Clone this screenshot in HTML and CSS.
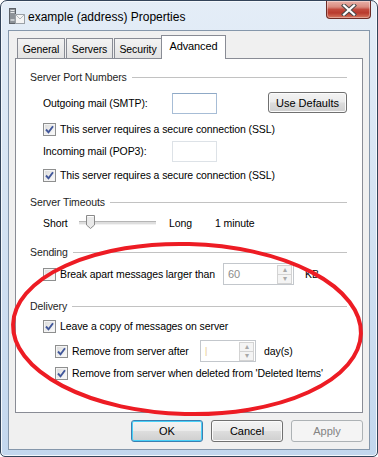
FILE: index.html
```html
<!DOCTYPE html>
<html lang="en">
<head>
    <meta charset="UTF-8">
    <title>example (address) Properties</title>
    <link rel="stylesheet" href="styles.css">
</head>
<body>
    <div class="window">
        <div class="titlebar">
            <svg class="app-icon" width="16" height="17" viewBox="0 0 16 17">
                <rect x="0.5" y="0.5" width="6" height="15" fill="#8d9298" stroke="#5d6268"/>
                <rect x="1.5" y="2" width="4" height="1" fill="#e6e8ea"/>
                <rect x="1.5" y="4" width="4" height="1" fill="#e6e8ea"/>
                <rect x="1.5" y="11" width="4" height="2" fill="#c7cbcf"/>
                <rect x="6.5" y="6.5" width="9" height="9" fill="#f4f4f4" stroke="#9aa0a6"/>
                <path d="M6.5 6.5 L11 11 L15.5 6.5" fill="none" stroke="#b3b8bd"/>
            </svg>
            <span class="title">example (address) Properties</span>
            <div class="close-btn">
                <svg width="16" height="12" viewBox="0 0 16 12">
                    <path d="M3 1.5 L13 10.5 M13 1.5 L3 10.5" stroke="#4a4a4a" stroke-width="4.2" stroke-linecap="square"/>
                    <path d="M3 1.5 L13 10.5 M13 1.5 L3 10.5" stroke="#ffffff" stroke-width="2.2" stroke-linecap="square"/>
                </svg>
            </div>
        </div>

        <div class="client">
            <div class="tabs">
                <div class="tab tab-general">General</div>
                <div class="tab tab-servers">Servers</div>
                <div class="tab tab-security">Security</div>
                <div class="tab active">Advanced</div>
            </div>

            <div class="panel">
                <div class="group-title">Server Port Numbers<span class="line"></span></div>

                <div class="row field-row mt6">
                    <span class="label-col">Outgoing mail (SMTP):</span>
                    <span class="textbox"></span>
                    <button class="btn btn-defaults">Use Defaults</button>
                </div>
                <div class="row check-row mt6">
                    <span class="check on"><svg viewBox="0 0 11 11"><path d="M2 5.5 L4.5 8.3 L9 2.2"/></svg></span>
                    <span>This server requires a secure connection (SSL)</span>
                </div>
                <div class="row field-row mt2">
                    <span class="label-col">Incoming mail (POP3):</span>
                    <span class="textbox pale"></span>
                </div>
                <div class="row check-row mt4">
                    <span class="check on"><svg viewBox="0 0 11 11"><path d="M2 5.5 L4.5 8.3 L9 2.2"/></svg></span>
                    <span>This server requires a secure connection (SSL)</span>
                </div>

                <div class="group-title mt9">Server Timeouts<span class="line"></span></div>
                <div class="row check-row mt3">
                    <span class="short">Short</span>
                    <span class="slider">
                        <span class="track"></span>
                        <svg class="thumb" width="9" height="14" viewBox="0 0 9 14">
                            <path d="M0.5 0.5 H8.5 V10 L4.5 13.5 L0.5 10 Z" fill="#e9e9e9" stroke="#8a8a8a"/>
                            <path d="M1.5 1.5 H7.5" stroke="#ffffff"/>
                        </svg>
                    </span>
                    <span class="long">Long</span>
                    <span>1 minute</span>
                </div>

                <div class="group-title mt11">Sending<span class="line"></span></div>
                <div class="row field-row mt2">
                    <span class="check"></span>
                    <span class="break-label">Break apart messages larger than</span>
                    <span class="spin spin-kb">
                        <span class="spin-value">60</span>
                        <span class="spin-btns">
                            <span class="spin-up">&#9652;</span>
                            <span class="spin-down">&#9662;</span>
                        </span>
                    </span>
                    <span class="unit-kb">KB</span>
                </div>

                <div class="group-title mt12">Delivery<span class="line"></span></div>
                <div class="row check-row mt2">
                    <span class="check on"><svg viewBox="0 0 11 11"><path d="M2 5.5 L4.5 8.3 L9 2.2"/></svg></span>
                    <span>Leave a copy of messages on server</span>
                </div>
                <div class="row field-row sub mt5">
                    <span class="check on"><svg viewBox="0 0 11 11"><path d="M2 5.5 L4.5 8.3 L9 2.2"/></svg></span>
                    <span class="days-label">Remove from server after</span>
                    <span class="spin spin-days">
                        <span class="spin-value caret">|</span>
                        <span class="spin-btns">
                            <span class="spin-up">&#9652;</span>
                            <span class="spin-down">&#9662;</span>
                        </span>
                    </span>
                    <span class="unit-days">day(s)</span>
                </div>
                <div class="row check-row sub mt2">
                    <span class="check on"><svg viewBox="0 0 11 11"><path d="M2 5.5 L4.5 8.3 L9 2.2"/></svg></span>
                    <span>Remove from server when deleted from 'Deleted Items'</span>
                </div>
            </div>

            <div class="buttons">
                <button class="btn btn-main default">OK</button>
                <button class="btn btn-main">Cancel</button>
                <button class="btn btn-main disabled">Apply</button>
            </div>
        </div>

        <!-- red hand-drawn mark on top of the dialog -->
        <svg class="annotation" width="378" height="457" viewBox="0 0 378 457">
            <ellipse cx="187" cy="329" rx="174" ry="85" transform="rotate(1.5 187 329)"
                     fill="none" stroke="#ed1c24" stroke-width="4"/>
        </svg>
    </div>
</body>
</html>
```

FILE: styles.css
```css
html, body {
    margin: 0;
    padding: 0;
    background: #ffffff;
}
body {
    font-family: "Liberation Sans", Arial, sans-serif;
    font-size: 10.5px;
    letter-spacing: -0.1px;
    color: #000;
    white-space: nowrap;
}
.window {
    position: relative;
    width: 378px;
    height: 457px;
    box-sizing: border-box;
    border: 1px solid #33445a;
    border-radius: 7px 7px 5px 5px;
    background: linear-gradient(#e4edf7 0%, #d6e4f3 40%, #c3d7ee 100%);
    box-shadow: inset 0 0 0 1px #f4f8fc;
    display: flex;
    flex-direction: column;
    overflow: hidden;
}

/* title bar */
.titlebar {
    height: 29px;
    display: flex;
    align-items: center;
    flex-shrink: 0;
}
.app-icon {
    margin-left: 8px;
    margin-top: 2px;
}
.title {
    margin-left: 3px;
    margin-top: 2px;
    font-size: 12px;
    letter-spacing: 0;
}
.close-btn {
    align-self: flex-start;
    margin-left: auto;
    margin-right: 6px;
    width: 45px;
    height: 18px;
    box-sizing: border-box;
    border: 1px solid #6d2b25;
    border-top: none;
    border-radius: 0 0 4px 4px;
    background: linear-gradient(#e9b1a8 0%, #d98c80 35%, #c24a3d 50%, #b93a2d 70%, #d6775f 100%);
    box-shadow: inset 0 0 0 1px rgba(255, 255, 255, 0.35);
    display: flex;
    align-items: center;
    justify-content: center;
}

/* client area */
.client {
    flex: 1;
    margin: 0 7px 6px 7px;
    border: 1px solid #8597ab;
    background: #f0f0f0;
    padding: 4px 6px 0 6px;
}
.tabs {
    display: flex;
    align-items: flex-end;
    height: 23px;
    padding-left: 2px;
}
.tab {
    height: 20px;
    box-sizing: border-box;
    border: 1px solid #898c95;
    border-bottom: none;
    background: linear-gradient(#f3f3f3, #e3e3e3);
    padding-top: 4px;
    text-align: center;
    margin-right: 1px;
}
.tab-general { width: 48px; }
.tab-servers { width: 47px; }
.tab-security { width: 48px; }
.tab.active {
    position: relative;
    z-index: 1;
    width: 65px;
    height: 24px;
    margin-left: -2px;
    margin-bottom: -1px;
    padding-top: 4px;
    font-size: 11px;
    background: #ffffff;
}
.panel {
    height: 355px;
    box-sizing: border-box;
    border: 1px solid #898c95;
    background: #ffffff;
    padding: 9px 15px 0 14px;
}

/* group headings */
.group-title {
    height: 18px;
    display: flex;
    align-items: center;
    color: #1e1e1e;
}
.group-title .line {
    flex: 1;
    height: 1px;
    margin-left: 5px;
    background: #c2c2c2;
}
.mt2 { margin-top: 2px; }
.mt3 { margin-top: 3px; }
.mt4 { margin-top: 4px; }
.mt5 { margin-top: 5px; }
.mt6 { margin-top: 6px; }
.mt9 { margin-top: 9px; }
.mt11 { margin-top: 11px; }
.mt12 { margin-top: 12px; }

.row {
    display: flex;
    align-items: center;
    padding-left: 13px;
}
.row.sub {
    padding-left: 25px;
}
.check-row { height: 18px; }
.field-row { height: 22px; }
.label-col { width: 129px; }

/* checkboxes */
.check {
    width: 13px;
    height: 13px;
    box-sizing: border-box;
    border: 1px solid #8e8f8f;
    background: linear-gradient(135deg, #dadada, #fcfcfc);
    box-shadow: inset 0 0 0 1px #f4f4f4;
    margin-right: 4px;
    flex-shrink: 0;
    display: flex;
}
.check svg {
    width: 11px;
    height: 11px;
}
.check path {
    fill: none;
    stroke: #41579a;
    stroke-width: 1.9;
}

/* text inputs */
.textbox {
    width: 45px;
    height: 21px;
    box-sizing: border-box;
    border: 1px solid #a7bdd6;
    border-top-color: #8fa9c6;
    background: #ffffff;
}
.textbox.pale {
    border-color: #dde2e7;
}

/* buttons */
.btn {
    font-family: "Liberation Sans", Arial, sans-serif;
    font-size: 11px;
    color: #000;
    height: 21px;
    border: 1px solid #707070;
    border-radius: 3px;
    background: linear-gradient(#f3f3f3 0%, #ebebeb 48%, #dddddd 52%, #cfcfcf 100%);
    box-shadow: inset 0 0 0 1px #fbfbfb;
    padding: 0;
}
.btn-defaults {
    width: 79px;
    margin-left: auto;
    margin-right: 0;
    margin-top: -1px;
}

/* slider */
.short { width: 36px; }
.slider {
    position: relative;
    width: 77px;
    height: 14px;
    display: flex;
    align-items: center;
}
.track {
    width: 100%;
    height: 2px;
    border-top: 1px solid #b5b5b5;
    border-bottom: 1px solid #f2f2f2;
    background: #dedede;
}
.thumb {
    position: absolute;
    left: 7px;
    top: -1px;
}
.long {
    margin-left: 13px;
    width: 46px;
}

/* spin boxes */
.break-label { width: 163px; }
.days-label { width: 128px; }
.spin {
    height: 22px;
    box-sizing: border-box;
    border: 1px solid #c3c7cc;
    background: #ffffff;
    display: flex;
}
.spin-kb { width: 71px; }
.spin-days { width: 56px; }
.spin-value {
    flex: 1;
    color: #8c8c8c;
    padding-left: 4px;
    line-height: 20px;
    font-size: 11px;
}
.spin-value.caret {
    color: #e8c88a;
    font-size: 9px;
}
.spin-btns {
    width: 15px;
    display: flex;
    flex-direction: column;
    margin: 1px;
}
.spin-up, .spin-down {
    flex: 1;
    border: 1px solid #d3d3d3;
    background: #f4f4f4;
    color: #a8a8a8;
    font-size: 8px;
    line-height: 8px;
    text-align: center;
}
.spin-down { border-top: none; }
.unit-kb { margin-left: 11px; }
.unit-days { margin-left: 8px; }

/* dialog buttons */
.buttons {
    display: flex;
    justify-content: flex-end;
    gap: 8px;
    margin-top: 7px;
}
.btn-main {
    width: 72px;
    height: 22px;
}
.btn-main.default {
    border-color: #3c7fb1;
    box-shadow: inset 0 0 0 1px #48d0f8;
}
.btn-main.disabled {
    border-color: #adb2b5;
    background: #f4f4f4;
    color: #838383;
    box-shadow: none;
}

.annotation {
    position: absolute;
    left: -1px;
    top: -1px;
    pointer-events: none;
}
```
